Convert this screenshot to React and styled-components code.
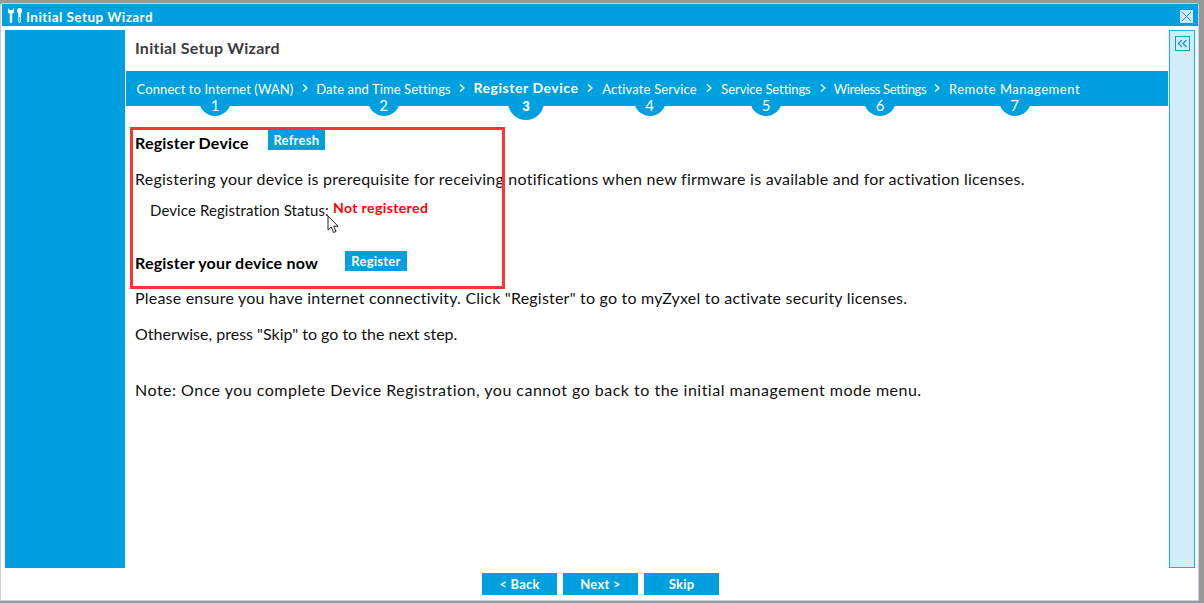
import React from "react";
import styled, { createGlobalStyle } from "styled-components";

const Global = createGlobalStyle`
  html, body { margin: 0; padding: 0; height: 100%; background: #999; }
  body { font-family: Lato, "Open Sans", "Liberation Sans", sans-serif; overflow: hidden; }
`;

const BLUE = "#00a0e0";

const Win = styled.div`
  box-sizing: border-box;
  width: 1199px;
  height: 598px;
  margin-top: 3px;
  background: #fff;
  border: 1px solid #c3cfe2;
  border-radius: 2px 2px 0 0;
  display: flex;
  flex-direction: column;
`;
const TitleBar = styled.div`
  height: 22px;
  background: ${BLUE};
  margin: 0 0 0 1px;
  display: flex;
  align-items: center;
  padding: 0 5px 0 5px;
  gap: 1px;
  flex-shrink: 0;
`;
const TitleText = styled.div`
  flex: 1;
  color: #fff;
  font-size: 13.5px;
  font-weight: 700;
  letter-spacing: 0.45px;
  padding-top: 3px;
`;
const CloseBtn = styled.div`
  width: 13px;
  height: 13px;
  margin-top: 3px;
  background: #cfe8f5;
  display: flex;
  align-items: center;
  justify-content: center;
`;
const Body = styled.div`
  display: grid;
  grid-template-columns: 120px 1044px 26px;
  margin: 4px 0 0 4px;
  height: 538px;
  flex-shrink: 0;
`;
const Side = styled.div`
  background: ${BLUE};
`;
const Main = styled.div`
  margin-left: 1px;
  width: 1042px;
`;
const WizardTitle = styled.div`
  height: 41px;
  line-height: 36px;
  padding-left: 9px;
  color: #3c3c3c;
  font-size: 16px;
  font-weight: 700;
  letter-spacing: 0.25px;
`;
const Bar = styled.div`
  height: 35px;
  background: ${BLUE};
  display: flex;
  padding-left: 11px;
`;
const Step = styled.div`
  display: flex;
  flex-direction: column;
  align-items: center;
  width: ${(p) => p.$w}px;
`;
const StepLabel = styled.div`
  position: relative;
  z-index: 1;
  height: 36px;
  line-height: 36px;
  color: #fff;
  white-space: nowrap;
  font-size: ${(p) => (p.$active ? 14 : 13)}px;
  font-weight: ${(p) => (p.$active ? 700 : 400)};
  letter-spacing: ${(p) => p.$ls}px;
  margin-top: ${(p) => (p.$active ? -1 : 0)}px;
`;
const Badge = styled.div`
  width: ${(p) => (p.$active ? 36 : 32)}px;
  height: ${(p) => (p.$active ? 36 : 32)}px;
  margin-top: ${(p) => (p.$active ? -22 : -23)}px;
  border-radius: 50%;
  background: ${BLUE};
  color: #fff;
  text-align: center;
  box-sizing: border-box;
  padding-top: ${(p) => (p.$active ? 13 : 12)}px;
  line-height: 18px;
  font-size: ${(p) => (p.$active ? 13 : 15)}px;
  font-weight: ${(p) => (p.$active ? 800 : 400)};
  flex-shrink: 0;
`;
const Chevron = styled.div`
  position: relative;
  z-index: 1;
  width: 24px;
  flex-shrink: 0;
  display: flex;
  justify-content: center;
  padding-top: 12px;
  height: 10px;
`;
const Content = styled.div`
  position: relative;
  display: flow-root;
  padding-left: 9px;
  color: #111;
`;
const Row = styled.div`
  display: flex;
  align-items: flex-start;
  margin-top: ${(p) => p.$top}px;
`;
const Heading = styled.div`
  margin-top: ${(p) => p.$nudge}px;
  line-height: 20px;
  font-size: 16px;
  font-weight: 700;
  color: #000;
  letter-spacing: 0.2px;
`;
const Btn = styled.div`
  box-sizing: border-box;
  width: ${(p) => p.$w}px;
  height: ${(p) => p.$h || 20}px;
  margin-left: ${(p) => p.$left || 0}px;
  background: ${BLUE};
  color: #fff;
  font-size: 13px;
  font-weight: 700;
  letter-spacing: 0.25px;
  display: flex;
  align-items: center;
  justify-content: center;
`;
const Para = styled.div`
  margin-top: ${(p) => p.$top}px;
  line-height: 20px;
  font-size: 16px;
  letter-spacing: ${(p) => p.$ls}px;
  white-space: nowrap;
`;
const StatusRow = styled.div`
  margin-top: 11px;
  padding-left: 15px;
  line-height: 20px;
  font-size: 15px;
  letter-spacing: 0.1px;
  white-space: nowrap;
  display: flex;
`;
const StatusValue = styled.span`
  color: #f00;
  font-weight: 700;
  font-size: 14px;
  letter-spacing: 0.4px;
  margin: -2px 0 0 4px;
`;
const Highlight = styled.div`
  position: absolute;
  left: 4px;
  top: 21px;
  width: 375px;
  height: 162px;
  box-sizing: border-box;
  border: 3px solid #f33;
  pointer-events: none;
`;
const Pointer = styled.svg`
  position: absolute;
  left: 201px;
  top: 109px;
`;
const Panel = styled.div`
  box-sizing: border-box;
  background: #d2edf9;
  border: 1px solid #12b2f2;
  width: 26px;
  padding: 5px 0 0 5px;
`;
const Collapse = styled.div`
  box-sizing: border-box;
  width: 15px;
  height: 15px;
  border: 1px solid ${BLUE};
  display: flex;
  align-items: center;
  justify-content: center;
`;
const Footer = styled.div`
  display: flex;
  justify-content: center;
  gap: 6px;
  margin-top: 5px;
  padding-left: 2px;
`;

const steps = [
  { n: 1, label: "Connect to Internet (WAN)", w: 156, ls: 0.1 },
  { n: 2, label: "Date and Time Settings", w: 133, ls: 0.1 },
  { n: 3, label: "Register Device", w: 104, ls: 0.53, active: true },
  { n: 4, label: "Activate Service", w: 95, ls: 0.17 },
  { n: 5, label: "Service Settings", w: 90, ls: -0.08 },
  { n: 6, label: "Wireless Settings", w: 90, ls: -0.34 },
  { n: 7, label: "Remote Management", w: 131, ls: 0.52 },
];

export default function App() {
  return (
    <>
      <Global />
      <Win>
        <TitleBar>
          <svg width="18" height="17" viewBox="0 0 18 17" fill="none">
            <path d="M1 1v3.500c0 1.200.9 2 1.800 2.300V15c0 1.300 2.400 1.300 2.400 0V6.800C6.100 6.500 7 5.700 7 4.500V1L5.200 3H2.800z" fill="#fff" />
            <path d="M12.700 1c1.900 0 2.300 1 2.300 2.300 0 1.400-.6 3-1.100 4V14c0 2.200-2.600 2.200-2.600 0V7.300c-.6-1-1.100-2.600-1.100-4C10.200 2 10.800 1 12.700 1z" fill="#fff" />
            <path d="M12.600 10v4.500" stroke={BLUE} strokeWidth="0.9" />
          </svg>
          <TitleText>Initial Setup Wizard</TitleText>
          <CloseBtn>
            <svg width="11" height="11" viewBox="0 0 11 11">
              <path d="M1 1l9 9M10 1l-9 9" stroke="#1b93cf" strokeWidth="1" fill="none" />
            </svg>
          </CloseBtn>
        </TitleBar>
        <Body>
          <Side />
          <Main>
            <WizardTitle>Initial Setup Wizard</WizardTitle>
            <Bar>
              {steps.map((s, i) => (
                <React.Fragment key={s.n}>
                  <Step $w={s.w}>
                    <StepLabel $active={s.active} $ls={s.ls}>{s.label}</StepLabel>
                    <Badge $active={s.active}>{s.n}</Badge>
                  </Step>
                  {i < steps.length - 1 && (
                    <Chevron>
                      <svg width="8" height="10" viewBox="0 0 8 10">
                        <path d="M2 1.500l4 3.500-4 3.500" stroke="#fff" strokeWidth="1.300" fill="none" />
                      </svg>
                    </Chevron>
                  )}
                </React.Fragment>
              ))}
            </Bar>
            <Content>
              <Row $top={24}>
                <Heading $nudge={3}>Register Device</Heading>
                <Btn $w={57} $left={19}>Refresh</Btn>
              </Row>
              <Para $top={16} $ls={0.24}>
                Registering your device is prerequisite for receiving notifications when new firmware is available and for activation licenses.
              </Para>
              <StatusRow>
                Device Registration Status:<StatusValue>Not registered</StatusValue>
              </StatusRow>
              <Row $top={31}>
                <Heading $nudge={2}>Register your device now</Heading>
                <Btn $w={62} $left={27}>Register</Btn>
              </Row>
              <Para $top={15} $ls={0.21}>
                Please ensure you have internet connectivity. Click "Register" to go to myZyxel to activate security licenses.
              </Para>
              <Para $top={16} $ls={0}>Otherwise, press "Skip" to go to the next step.</Para>
              <Para $top={36} $ls={0.49}>
                Note: Once you complete Device Registration, you cannot go back to the initial management mode menu.
              </Para>
              <Highlight />
              <Pointer width="14" height="20" viewBox="0 0 14 20">
                <path d="M1 1v14l3.300-3 2.200 5.500 2.500-1-2.300-5.300H11z" fill="#fff" stroke="#222" strokeWidth="1" />
              </Pointer>
            </Content>
          </Main>
          <Panel>
            <Collapse>
              <svg width="11" height="9" viewBox="0 0 11 9">
                <path d="M5 1L1.500 4.500 5 8M9.500 1L6 4.500 9.500 8" stroke="#1b93cf" strokeWidth="1.300" fill="none" />
              </svg>
            </Collapse>
          </Panel>
        </Body>
        <Footer>
          <Btn $w={75} $h={22}>&lt; Back</Btn>
          <Btn $w={75} $h={22}>Next &gt;</Btn>
          <Btn $w={75} $h={22}>Skip</Btn>
        </Footer>
      </Win>
    </>
  );
}
